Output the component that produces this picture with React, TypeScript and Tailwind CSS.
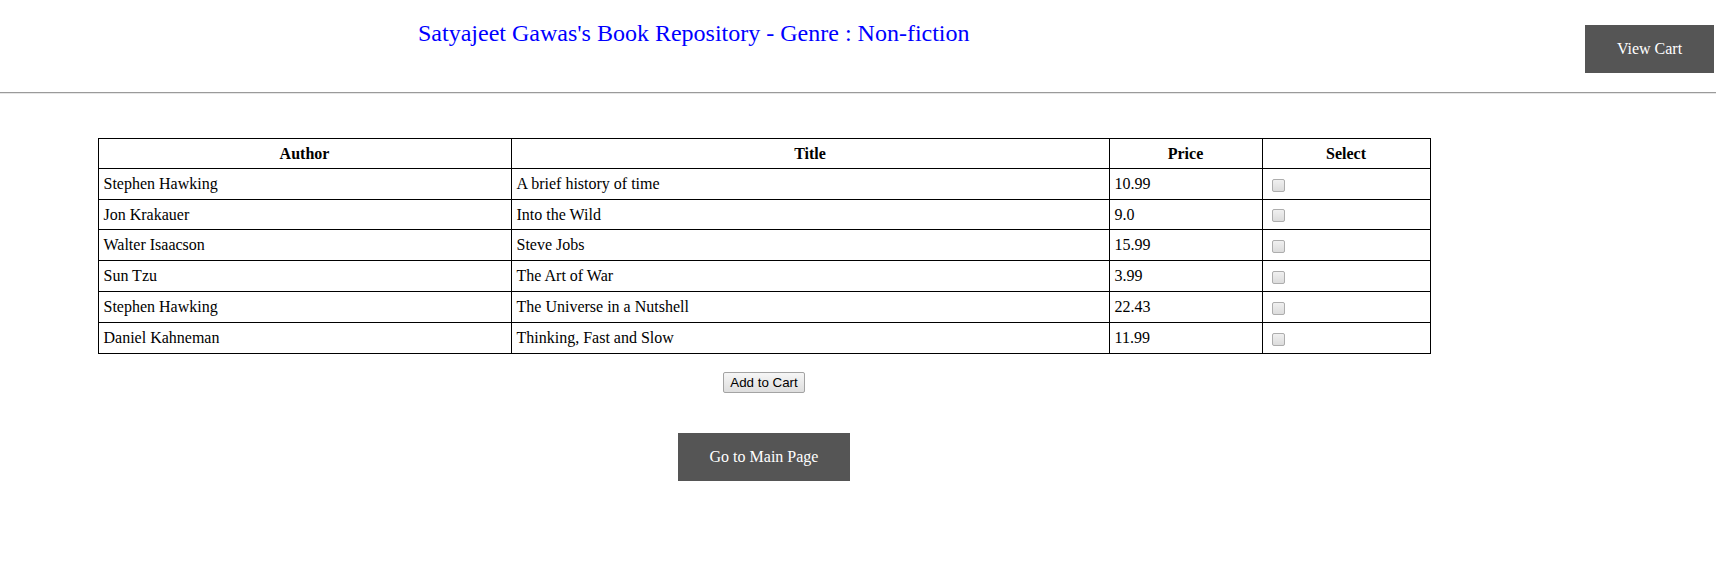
import React from "react";

const books = [
  { author: "Stephen Hawking", title: "A brief history of time", price: "10.99", h: "h-[31px]" },
  { author: "Jon Krakauer", title: "Into the Wild", price: "9.0", h: "h-[30px]" },
  { author: "Walter Isaacson", title: "Steve Jobs", price: "15.99", h: "h-[31px]" },
  { author: "Sun Tzu", title: "The Art of War", price: "3.99", h: "h-[31px]" },
  { author: "Stephen Hawking", title: "The Universe in a Nutshell", price: "22.43", h: "h-[31px]" },
  { author: "Daniel Kahneman", title: "Thinking, Fast and Slow", price: "11.99", h: "h-[31px]" },
];

function FakeCheckbox() {
  return (
    <span className="inline-block w-[13px] h-[13px] ml-[4px] align-middle border border-[#adadad] rounded-[2px] bg-gradient-to-b from-[#f0f0f0] to-[#dcdcdc]" />
  );
}

export default function App() {
  return (
    <div className="font-['Liberation_Serif','Times_New_Roman',serif] text-black bg-white min-h-[571px] w-[1721px]">
      <div className="flex items-start h-[92px]">
        <h2 className="ml-[418px] mt-[19px] text-[24px] leading-[28px] text-[#0000ff] font-normal whitespace-nowrap">
          Satyajeet Gawas's Book Repository - Genre : Non-fiction
        </h2>
        <button className="ml-auto mr-[7px] mt-[25px] bg-[#555555] text-white w-[129px] h-[48px] text-[16px] leading-[18px]">
          View Cart
        </button>
      </div>
      <div className="w-[1716px] h-[2px] border-t border-t-[#9a9a9a] border-b border-b-[#e6e6e6]" />
      <div className="ml-[98px] w-[1332px] mt-[44px] flex flex-col items-center">
        <table className="table-fixed border-collapse w-[1332px] text-[16px] leading-[18px]">
          <colgroup>
            <col className="w-[413px]" />
            <col className="w-[598px]" />
            <col className="w-[153px]" />
            <col className="w-[168px]" />
          </colgroup>
          <thead>
            <tr className="h-[30px]">
              <th className="border border-black font-bold text-center align-middle px-[5px]">Author</th>
              <th className="border border-black font-bold text-center align-middle px-[5px]">Title</th>
              <th className="border border-black font-bold text-center align-middle px-[5px]">Price</th>
              <th className="border border-black font-bold text-center align-middle px-[5px]">Select</th>
            </tr>
          </thead>
          <tbody>
            {books.map((b, i) => (
              <tr key={i} className={b.h}>
                <td className="border border-black px-[5px] align-middle text-left">{b.author}</td>
                <td className="border border-black px-[5px] align-middle text-left">{b.title}</td>
                <td className="border border-black px-[5px] align-middle text-left">{b.price}</td>
                <td className="border border-black px-[5px] align-middle text-left">
                  <FakeCheckbox />
                </td>
              </tr>
            ))}
          </tbody>
        </table>
        <button className="mt-[18px] h-[21px] px-[6px] font-['Liberation_Sans',Arial,sans-serif] text-[13.33px] leading-[15px] text-black border border-[#a3a3a3] rounded-[2px] bg-gradient-to-b from-[#f6f6f6] to-[#dedede]">
          Add to Cart
        </button>
        <button className="mt-[40px] bg-[#555555] text-white w-[172px] h-[48px] text-[16px] leading-[18px]">
          Go to Main Page
        </button>
      </div>
    </div>
  );
}
